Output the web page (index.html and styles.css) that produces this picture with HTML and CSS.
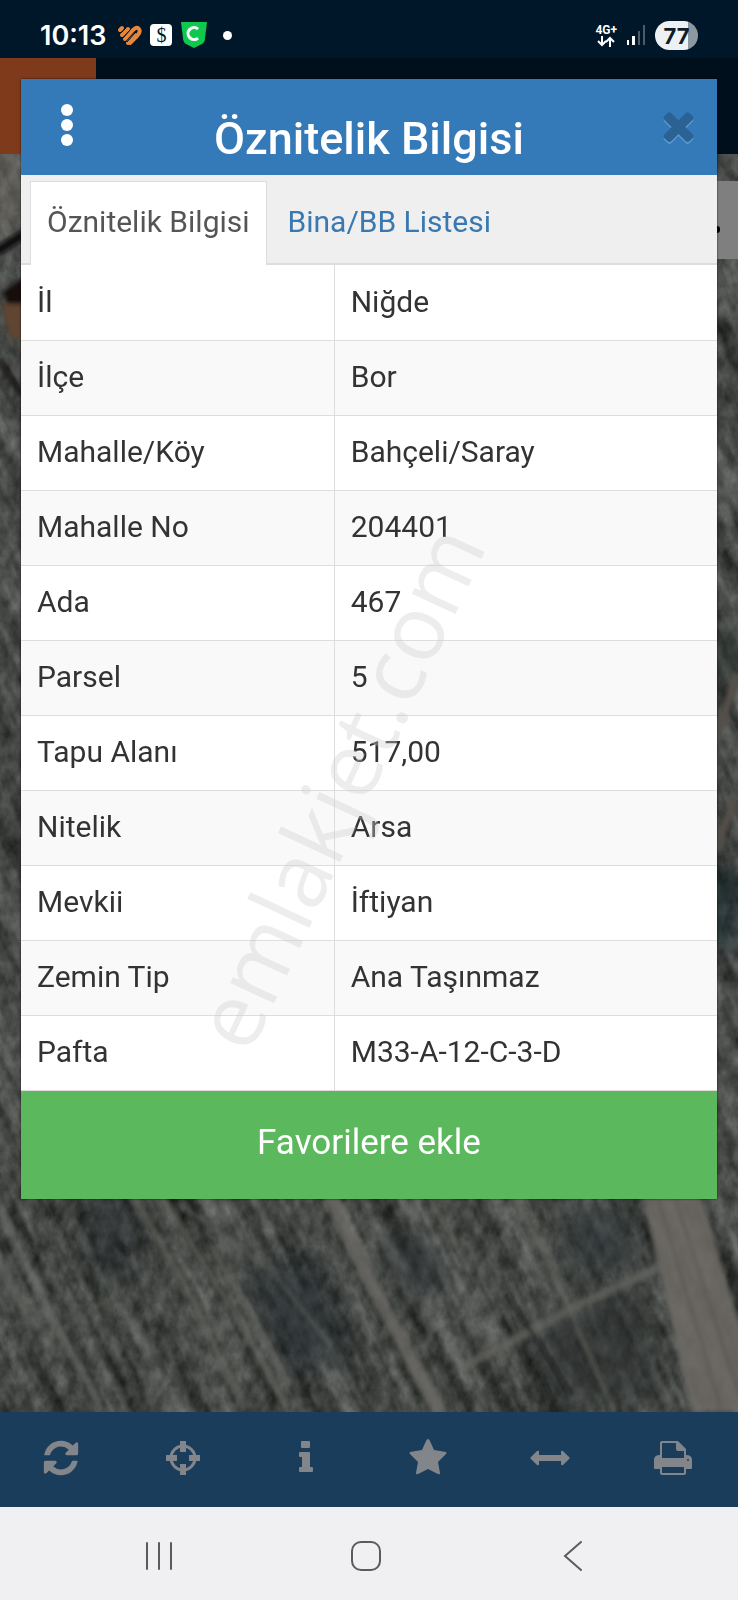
FILE: index.html
```html
<!DOCTYPE html>
<html lang="tr">
<head>
    <meta charset="UTF-8">
    <meta name="viewport" content="width=device-width, initial-scale=1.0">
    <title>Öznitelik Bilgisi</title>
    <link rel="stylesheet" href="styles.css">
</head>
<body>
    <div class="screen">
        <header class="status-bar">
            <div class="status-left">
                <span class="clock">10:13</span>
                <svg width="24" height="21" viewBox="0 0 24 21">
                    <g fill="none" stroke="#e8863a" stroke-width="4" stroke-linecap="round">
                        <path d="M2 5 L4 3"/>
                        <path d="M4 10 L10 4"/>
                        <path d="M7 14 L15 5 Q19 1 21 4 Q23 7 19 11 L12 18"/>
                        <path d="M10 18 L17 10"/>
                    </g>
                    <path d="M3 8 L8 3 M5 13 L12 5 M9 17 L17 8" stroke="#00172a" stroke-width="1"/>
                </svg>
                <span class="app-badge">$</span>
                <svg width="28" height="28" viewBox="0 0 28 28">
                    <path d="M1 1 H27 L25 17 Q25 21 22 23 L14 27 L6 23 Q3 21 3 17 Z" fill="#0fc94f"/>
                    <path d="M18 8 A6 6 0 1 0 18 17" fill="none" stroke="#fff" stroke-width="3"/>
                </svg>
                <span class="status-dot"></span>
            </div>
            <div class="status-right">
                <div class="network">
                    <span>4G+</span>
                    <svg width="18" height="11" viewBox="0 0 18 11" fill="none" stroke="#fff" stroke-width="2">
                        <path d="M5 0 V9 M1 5 L5 9 L9 5 M13 11 V2 M9 6 L13 2 L17 6"/>
                    </svg>
                </div>
                <svg width="20" height="20" viewBox="0 0 20 20">
                    <path d="M1 15h2v5H1z M6 11h3v9H6z" fill="#fff"/>
                    <path d="M12 6h2v14h-2z M17 0h2v20h-2z" fill="#4c5b68"/>
                </svg>
                <span class="battery">77</span>
            </div>
        </header>

        <div class="app-bar"><div class="app-logo"></div></div>

        <main class="map">
            <svg class="map-tiles" viewBox="0 0 738 1258" preserveAspectRatio="xMidYMid slice">
                <defs>
                    <filter id="grain" x="0" y="0" width="100%" height="100%" color-interpolation-filters="sRGB">
                        <feTurbulence type="fractalNoise" baseFrequency="0.09 0.06" numOctaves="4" seed="7"/>
                        <feColorMatrix values="0.5 0 0 0 0.02  0.5 0 0 0 0.03  0.5 0 0 0 0.02  0 0 0 0 1"/>
                    </filter>
                    <filter id="streaks" x="0" y="0" width="100%" height="100%" color-interpolation-filters="sRGB">
                        <feTurbulence type="fractalNoise" baseFrequency="0.05 0.005" numOctaves="3" seed="12"/>
                        <feColorMatrix values="0.7 0 0 0 -0.07  0.7 0 0 0 -0.06  0.7 0 0 0 -0.07  0 0 0 0 0.5"/>
                    </filter>
                    <filter id="soft" x="-20%" y="-20%" width="140%" height="140%"><feGaussianBlur stdDeviation="2"/></filter>
                    <filter id="softer" x="-50%" y="-50%" width="200%" height="200%"><feGaussianBlur stdDeviation="12"/></filter>
                </defs>
                <rect width="738" height="1258" filter="url(#grain)"/>
                <g transform="rotate(-27 369 629)"><rect x="-400" y="-300" width="1540" height="1900" filter="url(#streaks)"/></g>
                <g filter="url(#softer)" opacity="0.5">
                    <path d="M95 1040 L125 1040 L135 1110 L100 1130Z" fill="#1b2126"/>
                    <path d="M250 1120 L310 1110 L350 1200 L290 1220Z" fill="#222b31"/>
                    <path d="M560 1060 L620 1050 L640 1110 L580 1120Z" fill="#202a2d"/>
                    <path d="M380 1080 L430 1080 L450 1130 L410 1150Z" fill="#262b2e"/>
                    <path d="M520 1180 L640 1130 L660 1240 L560 1258Z" fill="#25292b"/>
                    <path d="M700 480 h38 v60 h-38z" fill="#14231a"/>
                    <path d="M700 715 h38 v80 h-38z" fill="#04191a"/>
                    <path d="M0 0 h22 v80 h-22z" fill="#8a8176"/>
                </g>
                <g filter="url(#soft)" fill="none">
                    <path d="M640 1030 L698 1030 L765 1258 L692 1258Z" fill="#6e6b66" opacity="0.85"/>
                    <path d="M658 1044 L722 1258 M675 1044 L745 1258" stroke="#55534f" stroke-width="2"/>
                    <path d="M328 1035 L368 1125 L440 1258" stroke="#6b6a66" stroke-width="13" opacity="0.75"/>
                    <path d="M130 1035 L195 1150 L245 1258 M160 1040 L235 1160 L285 1250 M210 1090 L290 1230" stroke="#63625d" stroke-width="5" opacity="0.7"/>
                    <path d="M0 1055 L45 1150 L102 1258 M-8 1090 L30 1170" stroke="#6a6964" stroke-width="5" opacity="0.7"/>
                    <path d="M510 1035 L550 1110 L580 1180 L615 1258 M425 1035 L470 1118" stroke="#686761" stroke-width="5" opacity="0.6"/>
                    <path d="M660 1113 L575 1153 L460 1215" stroke="#65645f" stroke-width="9" opacity="0.7"/>
                    <path d="M180 1050 L270 1115 L330 1190 M55 1180 L110 1145 M425 1200 L440 1140" stroke="#605f5a" stroke-width="3" opacity="0.7"/>
                    <path d="M508 1140 L522 1165 L540 1190 L570 1240 M118 1090 L130 1100" stroke="#131414" stroke-width="4" opacity="0.7"/>
                    <path d="M-4 98 L24 80" stroke="#0c0b10" stroke-width="9"/>
                    <path d="M2 138 L24 122 V152 H8Z" fill="#120c0d"/>
                    <path d="M2 150 H24 V188 L8 180Z" fill="#5f4433"/>
                    <path d="M-2 204 L22 242" stroke="#120f10" stroke-width="4"/>
                    <path d="M738 520 L714 590 M738 640 L712 700" stroke="#55504a" stroke-width="8"/>
                </g>
            </svg>
            <div class="map-search"><span class="map-search-dot"></span></div>
        </main>

        <nav class="toolbar">
            <button type="button" aria-label="Yenile">
                <svg width="40" height="40" viewBox="0 0 1792 1792"><path d="M1639 1056q0 5-1 7-64 268-268 434.5t-478 166.5q-146 0-282.5-55t-243.5-157l-129 129q-19 19-45 19t-45-19-19-45v-448q0-26 19-45t45-19h448q26 0 45 19t19 45-19 45l-137 137q71 66 161 102t187 36q134 0 250-65t186-179q11-17 53-117 8-23 30-23h192q13 0 22.5 9.5t9.5 22.5zm25-800v448q0 26-19 45t-45 19h-448q-26 0-45-19t-19-45 19-45l138-138q-148-137-349-137-134 0-250 65t-186 179q-11 17-53 117-8 23-30 23h-199q-13 0-22.5-9.5t-9.5-22.5v-7q65-268 270-434.5t480-166.5q146 0 284 55.5t245 156.5l130-129q19-19 45-19t45 19 19 45z"/></svg>
            </button>
            <button type="button" aria-label="Konum">
                <svg width="40" height="40" viewBox="0 0 40 40">
                    <circle cx="20" cy="20" r="12" fill="none" stroke="currentColor" stroke-width="3"/>
                    <path d="M17 3h6v11h-6z M17 26h6v11h-6z M3 17h11v6H3z M26 17h11v6H26z"/>
                </svg>
            </button>
            <button type="button" aria-label="Bilgi">
                <svg width="40" height="40" viewBox="0 0 40 40">
                    <path d="M16 3h7q1 0 1 1v5q0 1-1 1h-7q-1 0-1-1V4q0-1 1-1z M14 14h9q1 0 1 1v14h2q1 0 1 1v3q0 1-1 1H14q-1 0-1-1v-3q0-1 1-1h2V19h-2q-1 0-1-1v-3q0-1 1-1z"/>
                </svg>
            </button>
            <button type="button" aria-label="Favoriler">
                <svg width="40" height="40" viewBox="0 0 40 40">
                    <path d="M20 1 Q21 1 22 3 L26 12 L38 14 Q39 15 38 16 L30 24 L32 35 Q32 37 30 36 L20 31 L10 36 Q8 37 8 35 L10 24 L2 16 Q1 15 2 14 L14 12 L18 3 Q19 1 20 1Z"/>
                </svg>
            </button>
            <button type="button" aria-label="Ölçüm">
                <svg width="42" height="40" viewBox="0 0 42 40">
                    <path d="M1 20 L8 13 Q10 12 10 14 V17 H32 V14 Q32 12 34 13 L41 20 L34 27 Q32 28 32 26 V23 H10 V26 Q10 28 8 27Z"/>
                </svg>
            </button>
            <button type="button" aria-label="Yazdır">
                <svg width="40" height="40" viewBox="0 0 40 40">
                    <path fill-rule="evenodd" d="M7 5 Q7 3 9 3 H25 L33 11 V17 Q39 17 39 22 V30 Q39 31 38 31 H33 V35 Q33 37 31 37 H9 Q7 37 7 35 V31 H2 Q1 31 1 30 V22 Q1 17 7 17Z M9 5 V20 H31 V13 H25 Q23 13 23 11 V5Z M9 29 V35 H31 V29Z"/>
                    <circle cx="35" cy="22" r="1" fill="#1b3d5c"/>
                </svg>
            </button>
        </nav>

        <nav class="system-nav">
            <button type="button" aria-label="Son uygulamalar">
                <svg width="32" height="32" viewBox="0 0 32 32"><path d="M4 3V29 M16 3V29 M28 3V29" stroke-linecap="round"/></svg>
            </button>
            <button type="button" aria-label="Ana ekran">
                <svg width="32" height="32" viewBox="0 0 32 32"><rect x="2" y="2" width="28" height="28" rx="9"/></svg>
            </button>
            <button type="button" aria-label="Geri">
                <svg width="32" height="32" viewBox="0 0 32 32"><path d="M24 2 L8 16 L24 30" stroke-linecap="round"/></svg>
            </button>
        </nav>

        <section class="modal" role="dialog" aria-labelledby="modalTitle">
            <div class="modal-header">
                <button type="button" class="menu-btn" aria-label="Menü">
                    <svg width="14" height="44" viewBox="0 0 14 44"><circle cx="7" cy="7" r="6"/><circle cx="7" cy="22" r="6"/><circle cx="7" cy="37" r="6"/></svg>
                </button>
                <h1 id="modalTitle">Öznitelik Bilgisi</h1>
                <button type="button" class="close-btn" aria-label="Kapat">
                    <svg width="45" height="45" viewBox="0 0 1792 1792"><path d="M1490 1322q0 40-28 68l-136 136q-28 28-68 28t-68-28l-294-294-294 294q-28 28-68 28t-68-28l-136-136q-28-28-28-68t28-68l294-294-294-294q-28-28-28-68t28-68l136-136q28-28 68-28t68 28l294 294 294-294q28-28 68-28t68 28l136 136q28 28 28 68t-28 68l-294 294 294 294q28 28 28 68z"/></svg>
                </button>
            </div>
            <div class="tabs">
                <a href="#oznitelik" class="tab active">Öznitelik Bilgisi</a>
                <a href="#bina" class="tab">Bina/BB Listesi</a>
            </div>
            <table class="info-table" id="oznitelik">
                <tr><th scope="row">İl</th><td>Niğde</td></tr>
                <tr><th scope="row">İlçe</th><td>Bor</td></tr>
                <tr><th scope="row">Mahalle/Köy</th><td>Bahçeli/Saray</td></tr>
                <tr><th scope="row">Mahalle No</th><td>204401</td></tr>
                <tr><th scope="row">Ada</th><td>467</td></tr>
                <tr><th scope="row">Parsel</th><td>5</td></tr>
                <tr><th scope="row">Tapu Alanı</th><td>517,00</td></tr>
                <tr><th scope="row">Nitelik</th><td>Arsa</td></tr>
                <tr><th scope="row">Mevkii</th><td>İftiyan</td></tr>
                <tr><th scope="row">Zemin Tip</th><td>Ana Taşınmaz</td></tr>
                <tr><th scope="row">Pafta</th><td>M33-A-12-C-3-D</td></tr>
            </table>
            <button type="button" class="favorite-btn">Favorilere ekle</button>
            <span class="watermark">emlakjet.com</span>
        </section>
    </div>
</body>
</html>
```
FILE: styles.css
```css
* {
    box-sizing: border-box;
}

body {
    margin: 0;
    font-family: Roboto, sans-serif;
    font-size: 30px;
    color: #333;
    background: #00172a;
}

button {
    border: none;
    padding: 0;
    background: none;
    font-family: inherit;
    cursor: pointer;
}

svg {
    display: block;
}

.screen {
    position: relative;
    min-height: 100vh;
    display: flex;
    flex-direction: column;
    overflow: hidden;
}

/* status bar */
.status-bar {
    height: 58px;
    padding: 13px 40px 0;
    display: flex;
    justify-content: space-between;
    background: #00172a;
    color: #fff;
}

.status-left,
.status-right {
    display: flex;
    align-items: center;
    height: 44px;
}

.status-left {
    gap: 8px;
}

.clock {
    font-family: Inter, sans-serif;
    font-size: 27px;
    font-weight: 600;
    margin-right: 4px;
}

.app-badge {
    width: 22px;
    height: 22px;
    border-radius: 4px;
    background: #fff;
    color: #00172a;
    font-family: "Liberation Serif", serif;
    font-size: 20px;
    line-height: 22px;
    text-align: center;
}

.status-dot {
    width: 9px;
    height: 9px;
    margin-left: 7px;
    border-radius: 50%;
    background: #fff;
}

.status-right {
    gap: 9px;
}

.network {
    display: flex;
    flex-direction: column;
    align-items: center;
    font-size: 12px;
    font-weight: 700;
    line-height: 12px;
}

.battery {
    width: 43px;
    height: 29px;
    border-radius: 15px;
    background: linear-gradient(90deg, #eef1f4 77%, #8d979f 77%);
    color: #101c28;
    font-family: Inter, sans-serif;
    font-size: 22px;
    font-weight: 700;
    line-height: 30px;
    text-align: center;
}

/* page behind the dialog */
.app-bar {
    height: 96px;
    background: #000f1c;
}

.app-logo {
    width: 96px;
    height: 96px;
    background: #7f3a1c;
}

.map {
    position: relative;
    flex: 1;
    background: #444644;
}

.map-tiles {
    position: absolute;
    width: 100%;
    height: 100%;
}

.map-search {
    position: absolute;
    top: 27px;
    right: 0;
    width: 96px;
    height: 78px;
    background: #7f7f7f;
}

.map-search-dot {
    position: absolute;
    top: 45px;
    right: 18px;
    width: 8px;
    height: 7px;
    border-radius: 3px;
    background: #000;
}

.toolbar {
    height: 95px;
    padding: 0 4px 4px 0;
    display: grid;
    grid-template-columns: repeat(6, 1fr);
    background: #1b3d5c;
}

.toolbar button {
    display: flex;
    align-items: center;
    justify-content: center;
    color: #82868b;
}

.toolbar svg {
    fill: currentColor;
}

.system-nav {
    height: 93px;
    padding: 4px 62px 0 56px;
    display: grid;
    grid-template-columns: repeat(3, 1fr);
    background: #f0f0f3;
}

.system-nav button {
    display: flex;
    align-items: center;
    justify-content: center;
}

.system-nav svg {
    fill: none;
    stroke: #5b5b5d;
    stroke-width: 2;
}

/* dialog */
.modal {
    position: absolute;
    top: 79px;
    left: 21px;
    right: 21px;
    background: #fff;
    box-shadow: 0 0 2px rgba(0, 0, 0, 0.7);
}

.modal-header {
    height: 96px;
    padding: 0 16px 4px;
    display: grid;
    grid-template-columns: 60px 1fr 60px;
    align-items: center;
    background: #357ab8;
}

.modal-header h1 {
    margin: 0;
    padding-top: 28px;
    color: #fff;
    font-size: 45px;
    font-weight: 500;
    line-height: 48px;
    text-align: center;
}

.menu-btn {
    display: flex;
    justify-content: center;
}

.menu-btn svg {
    fill: #fff;
}

.close-btn {
    display: flex;
    justify-content: flex-end;
}

.close-btn svg {
    fill: #2a6293;
    filter: drop-shadow(0 2px 0 #5b97cb);
}

.tabs {
    height: 90px;
    padding: 6px 9px 0;
    display: flex;
    background: #efefef;
    border-bottom: 2px solid #ddd;
}

.tab {
    height: 84px;
    padding: 0 16px;
    border: 1px solid transparent;
    border-bottom: none;
    color: #3a78b0;
    line-height: 80px;
    text-decoration: none;
}

.tab + .tab {
    margin-left: 4px;
}

.tab.active {
    background: #fff;
    border-color: #ddd;
    color: #555;
}

.info-table {
    width: 100%;
    border-collapse: collapse;
    table-layout: fixed;
}

.info-table th,
.info-table td {
    height: 75px;
    padding: 0 16px 2px;
    border-bottom: 1px solid #ddd;
    font-weight: 400;
    text-align: left;
}

.info-table th {
    width: 45%;
    border-right: 1px solid #ddd;
}

.info-table tr:nth-child(even) {
    background: #f9f9f9;
}

.favorite-btn {
    display: block;
    width: 100%;
    height: 108px;
    padding-bottom: 4px;
    background: #5cb85c;
    color: #fff;
    font-size: 35px;
}

.watermark {
    position: absolute;
    top: 662px;
    left: 34px;
    color: rgba(205, 205, 205, 0.36);
    font-family: "Open Sans", sans-serif;
    font-size: 90px;
    line-height: 90px;
    transform: rotate(-65deg);
    pointer-events: none;
}
```
